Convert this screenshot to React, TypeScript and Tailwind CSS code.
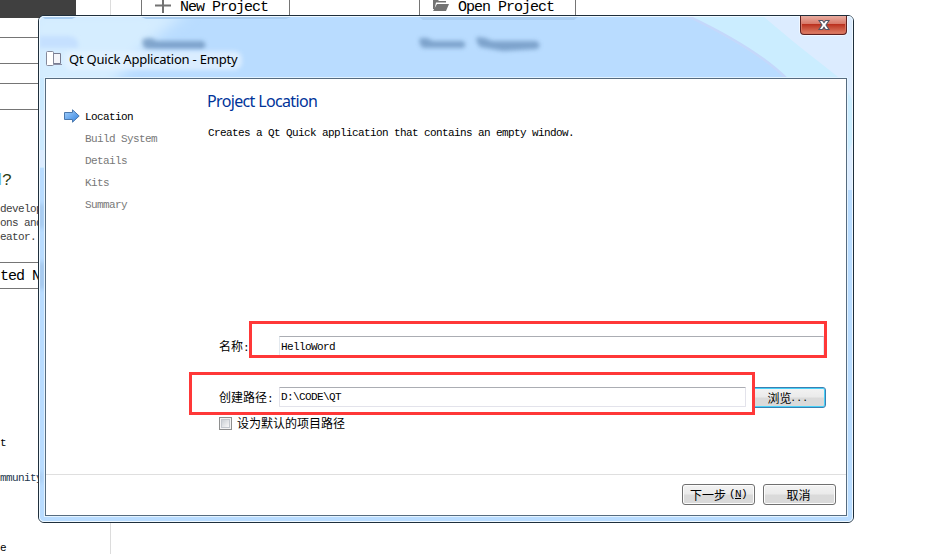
import type { ReactNode } from "react";

const mono12 =
  "font-['Liberation_Mono','Noto_Sans_CJK_SC',monospace] text-[11px] tracking-[-0.6px] whitespace-pre";
const mono16 =
  "font-['Liberation_Mono',monospace] text-[15px] tracking-[-1px] whitespace-pre";
const cjk = "font-['Noto_Sans_CJK_SC',sans-serif] text-[12px] whitespace-pre";

function WelcomePage() {
  return (
    <div className="flex h-[554px] w-[928px] bg-white">
      <aside className="h-full w-[111px] shrink-0 overflow-hidden border-r border-[#dcdcdc]">
        <div className="h-[18px] w-[76px] bg-[#404040]" />
        <div className="mt-[19px] h-[27px] border-y border-[#757575]" />
        <div className="mt-[19px] h-[27px] border-y border-[#757575]" />
        <div className="mt-[61px] flex h-[20px] items-center font-['Liberation_Mono',monospace] text-[17px] tracking-[-1.2px]">
          <span className="-ml-[8px] text-[#68b8e0]">d</span>
          <span className="ml-px text-[#2b3a10]">?</span>
        </div>
        <div className={`${mono12} mt-[11px] leading-[14px] text-[#404040]`}>
          <div>developers</div>
          <div>ons and</div>
          <div>eator.</div>
        </div>
        <div className={`${mono16} mt-[18px] h-[27px] border-y border-[#757575] leading-[27px]`}>
          ted Now
        </div>
        <div className={`${mono12} mt-[147px] h-[14px] leading-[14px]`}>t</div>
        <div className={`${mono12} mt-[21px] h-[14px] leading-[14px] text-[#23364d]`}>mmunity</div>
        <div className={`${mono12} mt-[56px] h-[14px] leading-[14px]`}>e</div>
      </aside>
      <div className={`${mono16} flex h-[20px] pl-[30px] leading-[15px]`}>
        <div className="flex w-[149px] border-x border-[#757575] pl-[12px]">
          <svg width="18" height="14" viewBox="0 0 18 14">
            <path d="M1 5.5H17M9 -2V13" stroke="#737373" strokeWidth="2" />
          </svg>
          <span className="ml-[8px]">New Project</span>
        </div>
        <div className="ml-[129px] flex w-[157px] border-x border-[#757575] pl-[12px]">
          <svg width="18" height="14" viewBox="0 0 18 14">
            <path d="M1 0H6L7 1H14V2.500H4L2.500 9H1Z M5 4H17L14 11H1Z" fill="#737373" />
          </svg>
          <span className="ml-[8px]">Open Project</span>
        </div>
      </div>
    </div>
  );
}

function GlassFrame() {
  return (
    <svg className="absolute inset-0" width="814" height="506" viewBox="39 16 814 506">
      <defs>
        <filter id="soft" x="-20%" y="-80%" width="140%" height="260%">
          <feGaussianBlur stdDeviation="2.2" />
        </filter>
        <filter id="wide" x="-30%" y="-50%" width="160%" height="200%">
          <feGaussianBlur stdDeviation="7" />
        </filter>
      </defs>
      <rect x="39" y="16" width="814" height="506" fill="#b9dcff" />
      <path d="M30 10H190C165 30 140 45 110 90H30Z" fill="#d5edff" filter="url(#wide)" />
      <path d="M39 36H70Q80 38 78 48H39Z" fill="#c5e0ff" filter="url(#soft)" />
      <path d="M39 78H46V168H39Z" fill="#cceaff" />
      <path d="M39 110H46V130H39ZM39 150H46V167H39Z" fill="#dcecff" />
      <path d="M688 16C730 38 765 58 788 80H853V190H846V80L853 16Z" fill="#cbedff" />
      <path d="M688 16C730 36 765 57 787 79" stroke="#c4d8fb" strokeWidth="2.5" fill="none" />
      <path d="M763 16C788 38 818 61 842 80L853 102V16Z" fill="#dcecff" />
      <path d="M853 140L846 158V190H853Z" fill="#dcecff" />
      <path d="M42 17H76L72 19H45ZM141 17H291L286 19H146ZM419 17H578L574 20H423Z" fill="#a8ccf0" />
      <g fill="#6a91bc" opacity=".75" filter="url(#soft)">
        <path d="M143 39L151 38L157 41H203Q208 45 203 49H146Q141 45 143 39Z" />
        <path d="M420 38L427 38L433 41H463Q468 45 463 48H423Q418 44 420 38Z" />
        <path d="M477 37L485 38L492 41H536Q543 45 537 49L503 51L480 47Q475 42 477 37Z" />
      </g>
      <rect x="64" y="51" width="178" height="19" rx="8" fill="#e6f3ff" opacity=".75" filter="url(#soft)" />
      <g fill="#7ba0c8" opacity=".35" filter="url(#soft)">
        <rect x="39" y="204" width="5" height="24" />
        <rect x="39" y="262" width="6" height="27" />
        <rect x="39" y="472" width="3" height="11" />
      </g>
    </svg>
  );
}

function CloseButton() {
  return (
    <div className="absolute right-[6px] top-0 flex h-[19px] w-[47px] items-center justify-center rounded-b-[4px] border border-t-0 border-[#5c2020] bg-linear-to-b from-[#e8aca0] from-0% via-[#d77767] via-45% to-[#d6715b] shadow-[0_0_0_1px_rgba(255,255,255,0.6)]">
      <div className="absolute inset-x-px bottom-px h-[9px] rounded-b-[3px] bg-linear-to-b from-[#b92c1a] to-[#db7861]" />
      <svg className="relative" width="14" height="12" viewBox="0 0 14 12">
        <path d="M2 1.5H5.4L7 3.5L8.6 1.5H12L9 6L12 10.5H8.6L7 8.3L5.4 10.5H2L5 6Z" fill="#fff" stroke="#535666" strokeWidth="1.1" />
      </svg>
    </div>
  );
}

function TitleBar() {
  return (
    <div className="relative flex h-[61px] items-start pl-[7px] pt-[33px]">
      <svg className="mt-px" width="17" height="18" viewBox="0 0 17 18">
        <path d="M7.5 3.5H14.5V13.5H7.5Z" fill="#f4f5fa" stroke="#777b90" />
        <path d="M8 14.5H16" stroke="#8b8fa5" />
        <rect x=".5" y="1.500" width="7" height="14" rx="1" fill="#fff" stroke="#85899b" />
      </svg>
      <span className="ml-[6px] whitespace-nowrap font-['Noto_Sans',sans-serif] text-[13px] leading-[20px] tracking-[-0.22px] text-black">
        Qt Quick Application - Empty
      </span>
    </div>
  );
}

function Steps() {
  return (
    <div className="w-[161px] shrink-0 pl-[18px] pt-[26px]">
      {["Location", "Build System", "Details", "Kits", "Summary"].map((step, i) => (
        <div key={step} className="flex h-[22px] items-center">
          <span className="w-[21px]">
            {i === 0 && (
              <svg width="17" height="15" viewBox="0 0 17 15">
                <defs>
                  <linearGradient id="arrow" x2="1" y2="1">
                    <stop stopColor="#a9d3fc" />
                    <stop offset="1" stopColor="#2e80df" />
                  </linearGradient>
                </defs>
                <path d="M.5 3.500H8.500V.8L15.200 7L8.500 13.200V10.500H.5Z" fill="url(#arrow)" stroke="#4b78ad" />
              </svg>
            )}
          </span>
          <span className={`${mono12} pt-[2px] ${i === 0 ? "text-black" : "text-[#787878]"}`}>{step}</span>
        </div>
      ))}
    </div>
  );
}

function Button({ children, className }: { children: ReactNode; className: string }) {
  return (
    <button
      className={`${cjk} flex h-[21px] shrink-0 items-center justify-center rounded-[3px] border bg-linear-to-b from-[#f3f3f3] from-0% via-[#ebebeb] via-45% to-[#dadada] to-55% leading-[19px] text-black ${className}`}
    >
      {children}
    </button>
  );
}

function Wizard() {
  return (
    <div className="absolute left-[38px] top-[15px] h-[508px] w-[816px] overflow-hidden rounded-[6px] border border-[#1f2f3c]">
      <GlassFrame />
      <div className="absolute inset-0 rounded-[5px] border border-[#eef8ff]" />
      <TitleBar />
      <CloseButton />
      <div className="relative ml-[6px] mt-px flex h-[438px] w-[802px] flex-col border border-[#566b7f] bg-white shadow-[0_0_0_1px_#e3f3ff]">
        <div className="flex h-[235px]">
          <Steps />
          <div>
            <h1 className="mt-[11px] whitespace-nowrap font-['Noto_Sans',sans-serif] text-[16px] leading-[22px] tracking-[-0.65px] text-[#003399]">
              Project Location
            </h1>
            <p className={`${mono12} ml-px mt-[13px] leading-[16px]`}>
              Creates a Qt Quick application that contains an empty window.
            </p>
          </div>
        </div>
        <div className="mt-[22px] flex h-[22px] items-center pl-[173px]">
          <label className={`${cjk} w-[60px]`}>名称<span className={mono12}>:</span></label>
          <div className={`${mono12} flex h-[22px] w-[545px] items-center border border-[#e3e9ef] border-t-[#abadb3] pl-px`}>
            HelloWord
          </div>
        </div>
        <div className="mt-[29px] flex h-[21px] items-start pl-[173px]">
          <label className={`${cjk} w-[60px] leading-[20px]`}>创建路径<span className={mono12}>:</span></label>
          <div className={`${mono12} flex h-[20px] w-[467px] items-center rounded-[1px] border border-[#e3e3eb] border-t-[#abadb3] pl-px pt-px`}>
            D:\CODE\QT
          </div>
          <Button className="ml-[6px] w-[74px] border-[#3c7fb1] pr-px shadow-[inset_0_0_0_1px_#48d1f8]">
            浏览<span className="font-['Liberation_Sans'] text-[12px] leading-[19px] tracking-[2.67px]">...</span>
          </Button>
        </div>
        <div className="mt-[5px] flex h-[20px] items-center pl-[173px]">
          <span className="flex size-[13px] items-center justify-center border border-[#8e8f8f] bg-[#f4f4f4]">
            <span className="size-[9px] border border-[#c3c8ce] bg-linear-to-br from-[#cbd0d5] to-[#f8f8f8]" />
          </span>
          <span className={`${cjk} ml-[5px]`}>设为默认的项目路径</span>
        </div>
        <div className="mt-auto flex h-[41px] items-start justify-end gap-[8px] border-t border-[#dfdfdf] pr-[10px] pt-[9px]">
          <Button className="w-[73px] border-[#707070] shadow-[inset_0_0_0_1px_#fcfcfc]">
            下一步<span className={`${mono12} ml-[3px]`}>(<u>N</u>)</span>
          </Button>
          <Button className="w-[73px] border-[#707070] pr-[2px] shadow-[inset_0_0_0_1px_#fcfcfc]">取消</Button>
        </div>
      </div>
    </div>
  );
}

export default function App() {
  return (
    <div className="relative h-[554px] w-[928px] overflow-hidden">
      <WelcomePage />
      <Wizard />
      <div className="absolute left-[249px] top-[321px] h-[37px] w-[578px] border-[3px] border-[#ff3838]" />
      <div className="absolute left-[189px] top-[372px] h-[43px] w-[566px] border-[3px] border-[#ff3838]" />
    </div>
  );
}
